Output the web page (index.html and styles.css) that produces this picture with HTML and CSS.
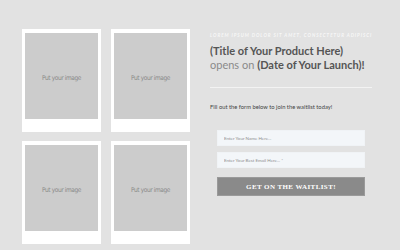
FILE: index.html
```html
<!DOCTYPE html>
<html lang="en">
<head>
    <meta charset="UTF-8">
    <meta name="viewport" content="width=device-width, initial-scale=1.0">
    <title>Waitlist</title>
    <link rel="stylesheet" href="styles.css">
</head>
<body>
    <div class="page">
        <div class="gallery">
            <div class="polaroid"><div class="photo">Put your image</div></div>
            <div class="polaroid"><div class="photo">Put your image</div></div>
            <div class="polaroid"><div class="photo">Put your image</div></div>
            <div class="polaroid"><div class="photo">Put your image</div></div>
        </div>

        <div class="info">
            <p class="kicker">Lorem ipsum dolor sit amet, consectetur adipisci</p>
            <h1 class="title">
                <strong>(Title of Your Product Here)</strong><br>
                opens on <strong>(Date of Your Launch)!</strong>
            </h1>
            <hr class="divider">
            <p class="lead">Fill out the form below to join the waitlist today!</p>

            <form class="waitlist">
                <input class="field" type="text" placeholder="Enter Your Name Here...">
                <input class="field" type="email" placeholder="Enter Your Best Email Here... *">
                <button class="btn" type="button">Get on the waitlist!</button>
            </form>
        </div>
    </div>
</body>
</html>
```

FILE: styles.css
```css
body {
    margin: 0;
    background-color: #e2e2e2;
    font-family: 'Lato', 'Liberation Sans', sans-serif;
}
.page {
    display: flex;
    align-items: flex-start;
    padding: 29px 0 0 22px;
}
.gallery {
    display: grid;
    grid-template-columns: 79px 79px;
    column-gap: 10px;
    row-gap: 9px;
}
.polaroid {
    background: white;
    padding: 4px 3px 13px;
}
.photo {
    height: 86px;
    padding-top: 4px;
    box-sizing: border-box;
    background: #cccccc;
    display: flex;
    align-items: center;
    justify-content: center;
    font-family: 'DejaVu Sans', sans-serif;
    font-stretch: condensed;
    font-size: 6.5px;
    letter-spacing: -0.4px;
    color: #8a8a8a;
}
.info {
    margin-left: 20px;
    width: 162px;
}
.kicker {
    margin: 3px 0 0;
    font-size: 4.6px;
    line-height: 6px;
    font-style: italic;
    font-weight: bold;
    text-transform: uppercase;
    letter-spacing: 0.95px;
    color: #f7f7f7;
    white-space: nowrap;
}
.title {
    margin: 6px 0 0;
    font-size: 11px;
    line-height: 14px;
    font-weight: normal;
    color: #8a8a8a;
    white-space: nowrap;
}
.title strong {
    font-weight: bold;
    color: #555555;
}
.divider {
    margin: 15px 0 0;
    border: none;
    border-top: 1px solid #f3f3f3;
}
.lead {
    margin: 15px 0 0;
    font-size: 5.8px;
    line-height: 8px;
    color: #444444;
}
.waitlist {
    margin: 19px 0 0 7px;
    width: 148px;
    display: flex;
    flex-direction: column;
}
.field {
    box-sizing: border-box;
    height: 16px;
    margin: 0 0 6px;
    padding: 0 6px;
    border: 1px solid #f0f3f6;
    background: #f3f6f9;
    font-family: 'Lato', sans-serif;
    font-size: 4.5px;
    color: #555;
    outline: none;
}
.field::placeholder {
    color: #8f8f8f;
}
.btn {
    box-sizing: border-box;
    height: 19px;
    margin-top: 3px;
    border: 1px solid #9a9a9a;
    background: #8a8a8a;
    color: white;
    font-family: 'Liberation Serif', serif;
    font-weight: bold;
    font-size: 7px;
    letter-spacing: 0.4px;
    text-transform: uppercase;
    cursor: pointer;
}
```
